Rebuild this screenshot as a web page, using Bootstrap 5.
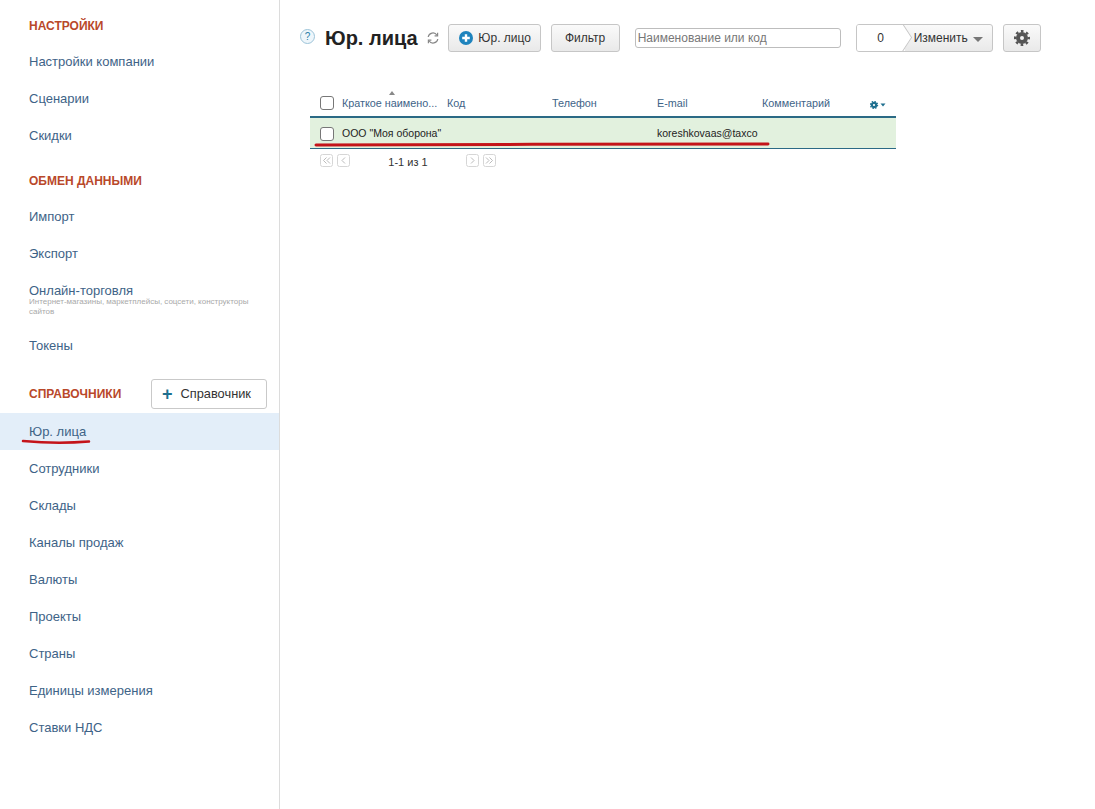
<!DOCTYPE html>
<html lang="ru">
  <head>
    <meta charset="UTF-8" />
    <meta name="viewport" content="width=device-width, initial-scale=1.0" />
    <title>Юр. лица</title>
    <link href="https://cdn.jsdelivr.net/npm/bootstrap@5.3.2/dist/css/bootstrap.min.css" rel="stylesheet" />
    <style>
      html, body { height: 100%; overflow: hidden; }
      body { font-family: "Liberation Sans", Arial, sans-serif; font-size: 13px; color: #222; background: #fff; position: relative; }
      .side { width: 280px; min-height: 809px; border-right: 1px solid #dcdcdc; padding-top: 7px; flex: none; }
      .side-head { height: 36px; padding: 2px 0 0 29px; display: flex; align-items: center; color: #b9482a; font-weight: 700; font-size: 12px; }
      .side-head2 { margin-top: 8px; }
      .side-head3 { margin: 15px 0 4px; height: 30px; padding: 0 12px 0 29px; justify-content: space-between; }
      .side-link { display: block; height: 37px; line-height: 37px; padding-left: 29px; color: #3e6387; text-decoration: none; }
      .side-link.active-item { background: #e3eef9; }
      .side-multi { height: 55px; line-height: 15px; padding-top: 11px; }
      .side-sub { display: block; color: #a9a9a9; font-size: 8px; line-height: 10px; margin-top: -1px; padding-right: 25px; }
      .add-ref { width: 116px; height: 30px; border: 1px solid #c9c9c9; border-radius: 3px; background: #fff; color: #333; font-size: 12.8px; padding: 0 5px 0 0; }
      .add-ref b { color: #1f6f8f; font-size: 18px; font-weight: 700; line-height: 1; margin-right: 8px; vertical-align: -2px; }
      .content { padding: 24px 0 0 20px; flex: 1; }
      .toolbar { height: 28px; }
      .help-ic { margin-top: -4px; margin-right: 10px; }
      .page-title { font-size: 20px; font-weight: 700; margin: 0 9px 0 0; color: #222; line-height: 28px; }
      .refresh-ic { stroke: #888; }
      .tool-btn { height: 28px; border: 1px solid #c6c6c6; border-radius: 3px; background: linear-gradient(#fafafa, #e9e9e9); color: #333; font-size: 12px; padding: 0; display: flex; align-items: center; justify-content: center; }
      .btn-add { width: 93px; margin-left: 9px; gap: 5px; padding-left: 2px; }
      .btn-filter { width: 69px; margin-left: 10px; }
      .search-box { width: 206px; height: 20px; margin-left: 15px; border: 1px solid #bdbdbd; border-radius: 3px; font-size: 12px; padding: 0 2px; color: #333; }
      .search-box::placeholder { color: #777; opacity: 1; }
      .change-box { width: 137px; margin-left: 15px; position: relative; overflow: hidden; justify-content: flex-start; }
      .change-num { width: 48px; height: 26px; line-height: 26px; text-align: center; background: #fff; position: relative; }
      .change-num::after { content: ""; position: absolute; right: -6px; top: 3px; width: 19px; height: 19px; background: #fff; border-top: 1px solid #c6c6c6; border-right: 1px solid #c6c6c6; transform: rotate(45deg) skew(12deg, 12deg); }
      .change-label { margin-left: 9px; position: relative; }
      .caret-down { display: inline-block; margin-left: 5px; border-left: 5px solid transparent; border-right: 5px solid transparent; border-top: 5px solid #777; vertical-align: 0; }
      .btn-gear { width: 38px; margin-left: 10px; }
      .grid-wrap { width: 586px; margin: 33px 0 0 10px; }
      .grid-table { table-layout: fixed; width: 586px; margin: 0; font-size: 10.5px; }
      .grid-table th, .grid-table td { padding: 0; white-space: nowrap; overflow: hidden; vertical-align: middle; font-weight: 400; border: 0; background: transparent; }
      .grid-table thead th { height: 32px; padding-top: 6px; color: #3e6387; font-size: 10.8px; border-bottom: 2px solid #2b6a85; position: relative; }
      .grid-table tbody td { height: 31px; padding-top: 2px; background: #e2f1de; color: #222; border-bottom: 1px solid #2b6a85; }
      .grid-table th.col-check, .grid-table td.col-check { padding-left: 10px; }
      .grid-table th.col-check .check-box { margin-top: -2px; }
      .check-box { display: block; width: 14px; height: 14px; border: 1px solid #777; border-radius: 3px; background: #fff; }
      .sort-mark { position: absolute; left: 47px; top: 6px; border-left: 3px solid transparent; border-right: 3px solid transparent; border-bottom: 4px solid #888; }
      .col-gear svg { margin-left: 3px; }
      .pager { padding-left: 10px; height: 24px; color: #333; font-size: 11px; }
      .pager-btn { display: block; }
      .pager-btn rect { fill: none; stroke: #d6d6d6; }
      .pager-btn path { fill: none; stroke: #bbb; }
      .pager-label { width: 116px; padding-top: 3px; text-align: center; }
      .notes { position: absolute; left: 0; top: 0; pointer-events: none; }
    </style>
  </head>
  <body>
    <div class="d-flex">
      <div class="side">
        <div class="side-head">НАСТРОЙКИ</div>
        <a class="side-link" href="#">Настройки компании</a>
        <a class="side-link" href="#">Сценарии</a>
        <a class="side-link" href="#">Скидки</a>
        <div class="side-head side-head2">ОБМЕН ДАННЫМИ</div>
        <a class="side-link" href="#">Импорт</a>
        <a class="side-link" href="#">Экспорт</a>
        <a class="side-link side-multi" href="#">Онлайн-торговля<span class="side-sub">Интернет-магазины, маркетплейсы, соцсети, конструкторы сайтов</span></a>
        <a class="side-link" href="#">Токены</a>
        <div class="side-head side-head3">СПРАВОЧНИКИ <button class="add-ref" type="button"><b>+</b>Справочник</button></div>
        <a class="side-link active-item" href="#">Юр. лица</a>
        <a class="side-link" href="#">Сотрудники</a>
        <a class="side-link" href="#">Склады</a>
        <a class="side-link" href="#">Каналы продаж</a>
        <a class="side-link" href="#">Валюты</a>
        <a class="side-link" href="#">Проекты</a>
        <a class="side-link" href="#">Страны</a>
        <a class="side-link" href="#">Единицы измерения</a>
        <a class="side-link" href="#">Ставки НДС</a>
      </div>

      <div class="content">
        <div class="toolbar d-flex align-items-center">
          <svg class="help-ic" width="15" height="15" viewBox="0 0 15 15">
            <circle cx="7.5" cy="7.5" r="7" fill="#eef6fb" stroke="#9cc3d8" />
            <text x="7.5" y="11" font-size="10" font-family="Liberation Sans" text-anchor="middle" fill="#2b7fa8">?</text>
          </svg>
          <h1 class="page-title">Юр. лица</h1>
          <svg class="refresh-ic" width="12" height="12" viewBox="0 0 12 12" fill="none" stroke-width="1.2">
            <path d="M1.2 5A4.8 4.8 0 0 1 10 3.2" />
            <path d="M10.8 7A4.8 4.8 0 0 1 2 8.8" />
            <path d="M10.6 0.8V3.8H7.6" />
            <path d="M1.4 11.2V8.2H4.4" />
          </svg>
          <button class="tool-btn btn-add" type="button">
            <svg width="14" height="14" viewBox="0 0 14 14">
              <circle cx="7" cy="7" r="7" fill="#1e83bd" />
              <path d="M7 3.2V10.8M3.2 7H10.8" stroke="#fff" stroke-width="2.4" />
            </svg>
            Юр. лицо
          </button>
          <button class="tool-btn btn-filter" type="button">Фильтр</button>
          <input class="search-box" type="text" placeholder="Наименование или код" />
          <div class="tool-btn change-box">
            <span class="change-num">0</span>
            <span class="change-label">Изменить<i class="caret-down"></i></span>
          </div>
          <button class="tool-btn btn-gear" type="button" aria-label="Настройки">
            <svg width="16" height="16" viewBox="0 0 16 16">
              <circle cx="8" cy="8" r="4" fill="none" stroke="#555" stroke-width="4" />
              <circle cx="8" cy="8" r="6.8" fill="none" stroke="#555" stroke-width="2.4" stroke-dasharray="2.6 2.74" stroke-dashoffset="1.3" />
            </svg>
          </button>
        </div>

        <div class="grid-wrap">
          <table class="table grid-table">
            <colgroup>
              <col style="width: 32px" /><col style="width: 105px" /><col style="width: 105px" /><col style="width: 105px" /><col style="width: 105px" /><col style="width: 105px" /><col style="width: 29px" />
            </colgroup>
            <thead>
              <tr>
                <th class="col-check"><span class="check-box"></span></th>
                <th>Краткое наимено...<i class="sort-mark"></i></th>
                <th>Код</th>
                <th>Телефон</th>
                <th>E-mail</th>
                <th>Комментарий</th>
                <th class="col-gear">
                  <svg width="17" height="8" viewBox="0 0 17 8">
                    <circle cx="4" cy="4" r="2.2" fill="none" stroke="#1f6f8f" stroke-width="2.2" />
                    <circle cx="4" cy="4" r="3.6" fill="none" stroke="#1f6f8f" stroke-width="1.2" stroke-dasharray="1.4 1.43" />
                    <path d="M10.5 2.5H15.5L13 5.5Z" fill="#1f6f8f" />
                  </svg>
                </th>
              </tr>
            </thead>
            <tbody>
              <tr>
                <td class="col-check"><span class="check-box"></span></td>
                <td>ООО "Моя оборона"</td>
                <td></td>
                <td></td>
                <td>koreshkovaas@taxco</td>
                <td></td>
                <td></td>
              </tr>
            </tbody>
          </table>
          <div class="pager d-flex align-items-center">
            <svg class="pager-btn" width="13" height="13" viewBox="0 0 13 13"><rect x="0.5" y="0.5" width="12" height="12" rx="2" /><path d="M6.5 3.5L3.5 6.5L6.5 9.5M10 3.5L7 6.5L10 9.5" /></svg>
            <svg class="pager-btn ms-1" width="13" height="13" viewBox="0 0 13 13"><rect x="0.5" y="0.5" width="12" height="12" rx="2" /><path d="M8 3.5L5 6.5L8 9.5" /></svg>
            <span class="pager-label">1-1 из 1</span>
            <svg class="pager-btn" width="13" height="13" viewBox="0 0 13 13"><rect x="0.5" y="0.5" width="12" height="12" rx="2" /><path d="M5 3.5L8 6.5L5 9.5" /></svg>
            <svg class="pager-btn ms-1" width="13" height="13" viewBox="0 0 13 13"><rect x="0.5" y="0.5" width="12" height="12" rx="2" /><path d="M3 3.5L6 6.5L3 9.5M6.5 3.5L9.5 6.5L6.5 9.5" /></svg>
          </div>
        </div>
      </div>
    </div>

    <!-- красные пометки поверх скриншота -->
    <svg class="notes" width="1095" height="809" viewBox="0 0 1095 809" fill="none" stroke="#c4141a" stroke-linecap="round">
      <path d="M316 145C450 144 640 144.5 768 144" stroke-width="3" />
      <path d="M23 441C45 443 70 443 89 441.5" stroke-width="2.5" />
    </svg>
    <script src="https://cdn.jsdelivr.net/npm/bootstrap@5.3.2/dist/js/bootstrap.bundle.min.js"></script>
  </body>
</html>
